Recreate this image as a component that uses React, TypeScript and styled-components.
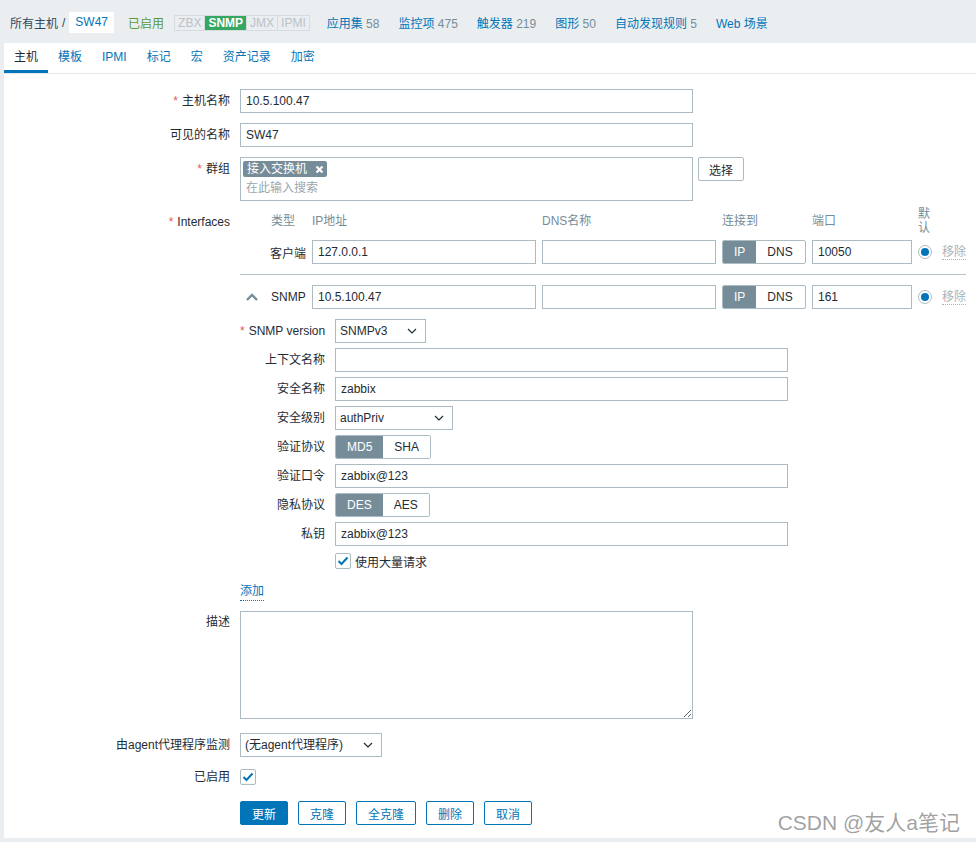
import styled, { createGlobalStyle } from 'styled-components';

const C = {
  text: '#1f2c33',
  link: '#0275b8',
  muted: '#768d99',
  border: '#acbbc2',
  bg: '#ebeef0',
  red: '#e45959',
  green: '#5a9a3a',
};

const GlobalStyle = createGlobalStyle`
  html, body {
    margin: 0;
    padding: 0;
    background: ${C.bg};
  }
  body {
    font-family: 'Liberation Sans', Arial, 'Noto Sans CJK SC', sans-serif;
    font-size: 12px;
    color: ${C.text};
  }
  * {
    box-sizing: border-box;
  }
`;

const Page = styled.div`
  position: relative;
  height: 842px;
  display: flex;
  flex-direction: column;
  padding-top: 3px;
  background: ${C.bg};
  overflow: hidden;
`;

const TopBar = styled.div`
  height: 39px;
  display: flex;
  align-items: center;
  padding-left: 10px;
  white-space: nowrap;
`;

const Crumb = styled.span`
  color: #2e4a62;
`;

const Slash = styled.span`
  margin-left: 4px;
  color: #2e4a62;
`;

const HostBox = styled.span`
  margin-left: 4px;
  height: 21px;
  line-height: 21px;
  padding: 0 6px;
  background: #fff;
  color: ${C.link};
`;

const Status = styled.span`
  margin-left: 14px;
  color: ${C.green};
`;

const BadgeGroup = styled.div`
  display: flex;
  margin-left: 10px;
  margin-right: -2px;
  border: 1px solid #d5dce0;
  height: 16px;
`;

const Badge = styled.span<{ $on?: boolean }>`
  padding: 0 3px;
  line-height: 14px;
  color: ${({ $on }) => ($on ? '#fff' : '#b8c3c8')};
  background: ${({ $on }) => ($on ? '#34a863' : 'transparent')};
  font-weight: ${({ $on }) => ($on ? 'bold' : 'normal')};
  & + & {
    border-left: 1px solid #d5dce0;
  }
`;

const NavItem = styled.span`
  margin-left: 19px;
  color: ${C.link};
`;

const Count = styled.span`
  color: ${C.muted};
`;

const Content = styled.div`
  flex: 1;
  margin: 1px 0 4px 4px;
  background: #fff;
  display: flex;
  flex-direction: column;
`;

const Tabs = styled.div`
  display: flex;
  height: 31px;
  border-bottom: 1px solid #e3e8ea;
`;

const Tab = styled.span<{ $active?: boolean }>`
  padding: 2px 10px 0;
  line-height: 25px;
  border-bottom: 3px solid ${({ $active }) => ($active ? C.link : 'transparent')};
  color: ${({ $active }) => ($active ? C.text : C.link)};
`;

const Form = styled.div`
  display: flex;
  flex-direction: column;
  padding-top: 15px;
`;

const Row = styled.div<{ $top?: number }>`
  display: grid;
  grid-template-columns: 226px auto;
  column-gap: 10px;
  align-items: start;
  justify-content: start;
  margin-top: ${({ $top }) => ($top ?? 10)}px;
`;

const Label = styled.div<{ $pad?: number; $lh?: number }>`
  text-align: right;
  line-height: ${({ $lh }) => ($lh ?? 24)}px;
  padding-top: ${({ $pad }) => ($pad ?? 0)}px;
  white-space: nowrap;
`;

const Star = styled.span`
  color: ${C.red};
  margin-right: 4px;
`;

const TextInput = styled.input<{ $w: number }>`
  width: ${({ $w }) => $w}px;
  height: 24px;
  border: 1px solid ${C.border};
  padding: 0 5px;
  font: inherit;
  color: ${C.text};
  background: #fff;
  outline: none;
  border-radius: 0;
`;

const Inline = styled.div`
  display: flex;
  align-items: flex-start;
  gap: 5px;
`;

const MultiSelect = styled.div`
  width: 453px;
  height: 44px;
  border: 1px solid ${C.border};
  padding: 3px 2px;
`;

const Tag = styled.span`
  display: inline-flex;
  align-items: center;
  gap: 8px;
  height: 16px;
  padding: 0 3px 0 4px;
  border-radius: 2px;
  background: ${C.muted};
  color: #fff;
  line-height: 16px;
`;

const Placeholder = styled.div`
  margin-top: 3px;
  padding-left: 3px;
  line-height: 16px;
  color: #9aa7ae;
`;

const PlainButton = styled.button`
  height: 24px;
  padding: 0 10px;
  border: 1px solid ${C.border};
  border-radius: 2px;
  background: #fff;
  color: ${C.text};
  font: inherit;
`;

const InterfaceGrid = styled.div`
  display: grid;
  grid-template-columns: 66px 224px 174px 84px 100px 14px max-content;
  justify-content: start;
  column-gap: 6px;
  row-gap: 4px;
  align-items: center;
`;

const HeadCell = styled.div<{ $indent?: number }>`
  height: 31px;
  display: flex;
  align-items: center;
  padding-left: ${({ $indent }) => ($indent ?? 0)}px;
  line-height: 14px;
  color: ${C.muted};
  word-break: break-all;
`;

const TypeCell = styled.div`
  display: flex;
  align-items: center;
  white-space: nowrap;
`;

const ChevronSlot = styled.span`
  width: 31px;
  display: flex;
  align-items: center;
  padding-left: 6px;
`;

const Toggle = styled.div`
  display: inline-flex;
  height: 24px;
  border: 1px solid ${C.border};
  border-radius: 2px;
  overflow: hidden;
`;

const ToggleOption = styled.span<{ $on?: boolean }>`
  padding: 0 11px;
  line-height: 22px;
  background: ${({ $on }) => ($on ? C.muted : '#fff')};
  color: ${({ $on }) => ($on ? '#fff' : C.text)};
`;

const Radio = styled.span`
  width: 14px;
  height: 14px;
  border: 1px solid ${C.border};
  border-radius: 50%;
  display: flex;
  align-items: center;
  justify-content: center;
  &::after {
    content: '';
    width: 8px;
    height: 8px;
    border-radius: 50%;
    background: ${C.link};
  }
`;

const RemoveLink = styled.span`
  justify-self: start;
  margin-left: 4px;
  color: #a7b3b9;
  line-height: 14px;
  border-bottom: 1px dotted #a7b3b9;
`;

const Separator = styled.div`
  grid-column: 1 / -1;
  height: 1px;
  margin: 6px 0;
  background: #b4c1c7;
`;

const Details = styled.div`
  grid-column: 1 / -1;
  margin-top: 6px;
  display: grid;
  grid-template-columns: 85px auto;
  justify-content: start;
  column-gap: 10px;
  row-gap: 5px;
  align-items: center;
`;

const DetailLabel = styled.div`
  text-align: right;
  line-height: 24px;
  white-space: nowrap;
`;

const CheckRow = styled.div`
  grid-column: 2;
  height: 20px;
  display: flex;
  align-items: center;
  gap: 4px;
`;

const CheckBox = styled.span`
  width: 16px;
  height: 16px;
  border: 1px solid ${C.border};
  border-radius: 2px;
  background: #fff;
  display: flex;
  align-items: center;
  justify-content: center;
`;

const CheckHolder = styled.div`
  padding-top: 2px;
`;

const AddLink = styled.span`
  display: inline-block;
  margin-top: 12px;
  line-height: 17px;
  color: ${C.link};
  border-bottom: 1px dotted ${C.link};
`;

const SelectWrap = styled.div<{ $w: number }>`
  position: relative;
  width: ${({ $w }) => $w}px;
  height: 24px;
`;

const SelectBox = styled.select`
  appearance: none;
  width: 100%;
  height: 24px;
  border: 1px solid ${C.border};
  border-radius: 0;
  padding: 0 22px 0 4px;
  font: inherit;
  color: ${C.text};
  background: #fff;
  outline: none;
`;

const SelectArrow = styled.svg`
  position: absolute;
  right: 9px;
  top: 9px;
  pointer-events: none;
`;

const TextArea = styled.textarea`
  width: 453px;
  height: 108px;
  border: 1px solid ${C.border};
  padding: 5px;
  font: inherit;
  color: ${C.text};
  outline: none;
  margin-bottom: 4px;
`;

const Buttons = styled.div`
  grid-column: 2;
  display: flex;
  gap: 10px;
`;

const ActionButton = styled.button<{ $primary?: boolean }>`
  height: 24px;
  padding: 0 11px;
  border: 1px solid ${C.link};
  border-radius: 2px;
  background: ${({ $primary }) => ($primary ? C.link : '#fff')};
  color: ${({ $primary }) => ($primary ? '#fff' : C.link)};
  font: inherit;
`;

const Watermark = styled.div`
  position: absolute;
  right: 16px;
  bottom: 6px;
  font-size: 21px;
  color: rgba(125, 125, 125, 0.72);
  font-family: 'Liberation Sans', Arial, 'Noto Sans CJK SC', sans-serif;
`;

function Select({ width, value }: { width: number; value: string }) {
  return (
    <SelectWrap $w={width}>
      <SelectBox defaultValue={value}>
        <option>{value}</option>
      </SelectBox>
      <SelectArrow width="10" height="6" viewBox="0 0 10 6">
        <polyline points="1,1 5,5 9,1" fill="none" stroke={C.text} strokeWidth="1.2" />
      </SelectArrow>
    </SelectWrap>
  );
}

function Check() {
  return (
    <CheckBox>
      <svg width="12" height="10" viewBox="0 0 12 10">
        <polyline points="1.5,5 4.5,8 10.5,1.5" fill="none" stroke={C.link} strokeWidth="2" />
      </svg>
    </CheckBox>
  );
}

function Chevron() {
  return (
    <svg width="12" height="8" viewBox="0 0 12 8">
      <polyline points="1,7 6,2 11,7" fill="none" stroke={C.muted} strokeWidth="2.4" />
    </svg>
  );
}

function InterfaceRow({ type, ip, port, collapsible }: { type: string; ip: string; port: string; collapsible?: boolean }) {
  return (
    <>
      <TypeCell>
        <ChevronSlot>{collapsible && <Chevron />}</ChevronSlot>
        {type}
      </TypeCell>
      <TextInput $w={224} value={ip} readOnly />
      <TextInput $w={174} value="" readOnly />
      <Toggle>
        <ToggleOption $on>IP</ToggleOption>
        <ToggleOption>DNS</ToggleOption>
      </Toggle>
      <TextInput $w={100} value={port} readOnly />
      <Radio />
      <RemoveLink>移除</RemoveLink>
    </>
  );
}

export default function App() {
  return (
    <Page>
      <GlobalStyle />
      <TopBar>
        <Crumb>所有主机</Crumb>
        <Slash>/</Slash>
        <HostBox>SW47</HostBox>
        <Status>已启用</Status>
        <BadgeGroup>
          <Badge>ZBX</Badge>
          <Badge $on>SNMP</Badge>
          <Badge>JMX</Badge>
          <Badge>IPMI</Badge>
        </BadgeGroup>
        <NavItem>应用集 <Count>58</Count></NavItem>
        <NavItem>监控项 <Count>475</Count></NavItem>
        <NavItem>触发器 <Count>219</Count></NavItem>
        <NavItem>图形 <Count>50</Count></NavItem>
        <NavItem>自动发现规则 <Count>5</Count></NavItem>
        <NavItem>Web 场景</NavItem>
      </TopBar>

      <Content>
        <Tabs>
          <Tab $active>主机</Tab>
          <Tab>模板</Tab>
          <Tab>IPMI</Tab>
          <Tab>标记</Tab>
          <Tab>宏</Tab>
          <Tab>资产记录</Tab>
          <Tab>加密</Tab>
        </Tabs>

        <Form>
          <Row $top={0}>
            <Label><Star>*</Star>主机名称</Label>
            <TextInput $w={453} value="10.5.100.47" readOnly />
          </Row>
          <Row>
            <Label>可见的名称</Label>
            <TextInput $w={453} value="SW47" readOnly />
          </Row>
          <Row>
            <Label><Star>*</Star>群组</Label>
            <Inline>
              <MultiSelect>
                <Tag>
                  接入交换机
                  <svg width="9" height="9" viewBox="0 0 9 9">
                    <path d="M1.5 1.5 L7.5 7.5 M7.5 1.5 L1.5 7.5" stroke="#fff" strokeWidth="2.2" />
                  </svg>
                </Tag>
                <Placeholder>在此输入搜索</Placeholder>
              </MultiSelect>
              <PlainButton>选择</PlainButton>
            </Inline>
          </Row>

          <Row $top={4}>
            <Label $pad={5}><Star>*</Star>Interfaces</Label>
            <div>
              <InterfaceGrid>
                <HeadCell $indent={31}>类型</HeadCell>
                <HeadCell>IP地址</HeadCell>
                <HeadCell>DNS名称</HeadCell>
                <HeadCell>连接到</HeadCell>
                <HeadCell>端口</HeadCell>
                <HeadCell>默认</HeadCell>
                <HeadCell />

                <InterfaceRow type="客户端" ip="127.0.0.1" port="10050" />
                <Separator />
                <InterfaceRow type="SNMP" ip="10.5.100.47" port="161" collapsible />

                <Details>
                  <DetailLabel><Star>*</Star>SNMP version</DetailLabel>
                  <Select width={91} value="SNMPv3" />
                  <DetailLabel>上下文名称</DetailLabel>
                  <TextInput $w={453} value="" readOnly />
                  <DetailLabel>安全名称</DetailLabel>
                  <TextInput $w={453} value="zabbix" readOnly />
                  <DetailLabel>安全级别</DetailLabel>
                  <Select width={118} value="authPriv" />
                  <DetailLabel>验证协议</DetailLabel>
                  <div>
                    <Toggle>
                      <ToggleOption $on>MD5</ToggleOption>
                      <ToggleOption>SHA</ToggleOption>
                    </Toggle>
                  </div>
                  <DetailLabel>验证口令</DetailLabel>
                  <TextInput $w={453} value="zabbix@123" readOnly />
                  <DetailLabel>隐私协议</DetailLabel>
                  <div>
                    <Toggle>
                      <ToggleOption $on>DES</ToggleOption>
                      <ToggleOption>AES</ToggleOption>
                    </Toggle>
                  </div>
                  <DetailLabel>私钥</DetailLabel>
                  <TextInput $w={453} value="zabbix@123" readOnly />
                  <CheckRow>
                    <Check />
                    使用大量请求
                  </CheckRow>
                </Details>
              </InterfaceGrid>
              <AddLink>添加</AddLink>
            </div>
          </Row>

          <Row>
            <Label $lh={22}>描述</Label>
            <TextArea />
          </Row>
          <Row>
            <Label>由agent代理程序监测</Label>
            <Select width={142} value="(无agent代理程序)" />
          </Row>
          <Row>
            <Label $lh={20}>已启用</Label>
            <CheckHolder>
              <Check />
            </CheckHolder>
          </Row>
          <Row $top={14}>
            <div />
            <Buttons>
              <ActionButton $primary>更新</ActionButton>
              <ActionButton>克隆</ActionButton>
              <ActionButton>全克隆</ActionButton>
              <ActionButton>删除</ActionButton>
              <ActionButton>取消</ActionButton>
            </Buttons>
          </Row>
        </Form>
      </Content>

      <Watermark>CSDN @友人a笔记</Watermark>
    </Page>
  );
}
